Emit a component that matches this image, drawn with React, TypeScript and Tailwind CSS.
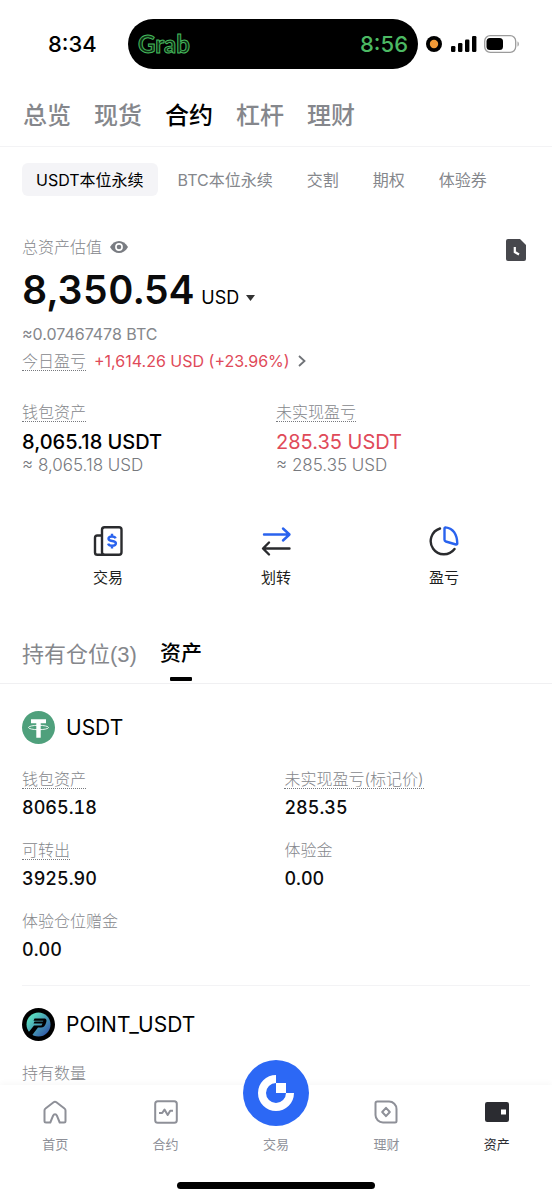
import React, { useState } from "react";
import clsx from "clsx";

const accountTabs = ["总览", "现货", "合约", "杠杆", "理财"];
const contractTypes = ["USDT本位永续", "BTC本位永续", "交割", "期权", "体验券"];

const usdtFields = [
  { label: "钱包资产", value: "8065.18", hint: true },
  { label: "未实现盈亏(标记价)", value: "285.35", hint: true },
  { label: "可转出", value: "3925.90", hint: true },
  { label: "体验金", value: "0.00", hint: false },
  { label: "体验仓位赠金", value: "0.00", hint: false },
];

function Label({ children, hint = false }: { children: React.ReactNode; hint?: boolean }) {
  return (
    <span
      className={clsx(
        "inline-block whitespace-nowrap border-b text-base leading-[18px] font-light text-[#85878c]",
        hint ? "border-dotted border-[#77797e]" : "border-transparent"
      )}
    >
      {children}
    </span>
  );
}

function StatusBar() {
  return (
    <div className="flex h-[84px] items-start pt-[19px]">
      <div className="flex h-[50px] w-32 items-center pl-12 text-[22px] font-medium text-black">8:34</div>
      <div className="flex h-[50px] flex-1 items-center justify-between rounded-full bg-black px-[10px]">
        <span className="font-['Lato'] text-2xl font-bold text-[#0c2a12] [-webkit-text-stroke:1px_#45b85c]">Grab</span>
        <span className="text-[22px] font-medium text-[#4cb963]">8:56</span>
      </div>
      <div className="flex h-[50px] w-[134px] items-center pl-2">
        <svg className="h-4 w-4" viewBox="0 0 16 16">
          <circle cx="8" cy="8" r="8" fill="#000" />
          <circle cx="8" cy="8" r="4.2" fill="#f19a37" />
        </svg>
        <svg className="ml-[9px] h-[18px] w-[26px]" viewBox="0 0 26 18">
          <rect x="0" y="11" width="4.4" height="6" rx="1.2" />
          <rect x="7" y="8" width="4.4" height="9" rx="1.2" />
          <rect x="14" y="4.5" width="4.4" height="12.5" rx="1.2" />
          <rect x="21" y="1" width="4.4" height="16" rx="1.2" />
        </svg>
        <svg className="ml-[7px] h-[18px] w-9" viewBox="0 0 36 18">
          <rect x="0.7" y="0.7" width="31" height="16.6" rx="5.5" fill="none" stroke="#9b9b9b" strokeWidth="1.3" />
          <rect x="2.5" y="3" width="16.5" height="12" rx="3.5" fill="#000" />
          <path d="M33.5 6.5c1.8.6 1.8 4.4 0 5z" fill="#9b9b9b" />
        </svg>
      </div>
    </div>
  );
}

function TradeIcon() {
  return (
    <svg className="h-8 w-8" viewBox="0 0 32 32" fill="none" stroke="#2a2b2e" strokeWidth="2.4" strokeLinejoin="round">
      <rect x="10" y="2.3" width="19.5" height="27.4" rx="2.5" />
      <path d="M10 10.500H5.300A2.300 2.300 0 0 0 3 12.800v14.600a2.300 2.300 0 0 0 2.300 2.300h7" />
      <path
        d="M23.600 13.400c-.5-1.300-1.700-1.900-3.600-1.900-2.100 0-3.500.9-3.500 2.300 0 3.300 7.400 1.200 7.400 4.500 0 1.500-1.500 2.400-3.900 2.400-2 0-3.400-.7-3.900-2.100M20 8.700v3M20 20.500v3"
        stroke="#2a63ee"
        strokeWidth="2.4"
      />
    </svg>
  );
}

function TransferIcon() {
  return (
    <svg className="h-8 w-8" viewBox="0 0 32 32" fill="none" strokeWidth="2.4" strokeLinecap="round" strokeLinejoin="round">
      <path d="M4 9.5h25M23 3.500l6.500 6-6.500 6" stroke="#2a63ee" />
      <path d="M29.500 23.500H3.500M9 17.500l-6 6 6 6" stroke="#2a2b2e" />
    </svg>
  );
}

function ProfitIcon() {
  return (
    <svg className="h-8 w-8" viewBox="0 0 32 32" fill="none" strokeWidth="2.4" strokeLinecap="round" strokeLinejoin="round">
      <path d="M12 3.500A13.200 13.200 0 1 0 26.500 24" stroke="#2a2b2e" />
      <path d="M16.500 3.500c0-.8.500-1.300 1.300-1.100C24.500 3.500 29 9 29.300 18.500c0 .8-.6 1.200-1.300 1l-10.200-3c-.8-.2-1.300-.8-1.300-1.700z" stroke="#2a63ee" />
    </svg>
  );
}

const actions = [
  { label: "交易", icon: <TradeIcon /> },
  { label: "划转", icon: <TransferIcon /> },
  { label: "盈亏", icon: <ProfitIcon /> },
];

const navItems = [
  {
    label: "首页",
    icon: (
      <svg className="h-6 w-6" viewBox="0 0 24 24" fill="none" stroke="currentColor" strokeWidth="2" strokeLinejoin="round">
        <path d="M1.500 10.500c0-.9.3-1.500 1-2L10.600 2.300c.9-.7 1.900-.7 2.800 0l8.100 6.200c.7.500 1 1.100 1 2V21c0 .9-.6 1.500-1.500 1.500h-4.300l-2.800-6.800c-.4-1-.9-1.500-1.900-1.500s-1.500.5-1.900 1.500L7.300 22.500H3A1.500 1.500 0 0 1 1.500 21z" />
      </svg>
    ),
  },
  {
    label: "合约",
    icon: (
      <svg className="h-6 w-6" viewBox="0 0 24 24" fill="none" stroke="currentColor" strokeWidth="2" strokeLinejoin="round">
        <rect x="1.2" y="1.2" width="21.6" height="21.6" rx="2.5" />
        <path d="M5 13h3.200L10.500 9.500l3.200 5.500 2.500-4.200H19" />
      </svg>
    ),
  },
  {
    label: "交易",
    icon: (
      <svg className="h-[66px] w-[66px]" viewBox="0 0 66 66">
        <circle cx="33" cy="33" r="33" fill="#2c68f5" />
        {/* ring with the upper right quarter cut out */}
        <path d="M33 15v8a10 10 0 1 0 10 10h8a18 18 0 1 1-18-18z" fill="#fff" />
        <path d="M33 23h10v10H33z" fill="#fff" />
      </svg>
    ),
  },
  {
    label: "理财",
    icon: (
      <svg className="h-6 w-6" viewBox="0 0 24 24" fill="none" stroke="currentColor" strokeWidth="2" strokeLinejoin="round">
        <path d="M3.200 1.500H15a7.500 7.500 0 0 1 7.500 7.500v12c0 .9-.6 1.500-1.500 1.500H9A7.500 7.500 0 0 1 1.500 15V3.200c0-1 .7-1.700 1.700-1.700z" />
        <path d="M12 7.800l3.800 4.200-3.800 4.200L8.200 12z" />
      </svg>
    ),
  },
  {
    label: "资产",
    icon: (
      <svg className="h-6 w-6" viewBox="0 0 24 24">
        <rect x="0" y="2" width="24" height="20" rx="2.2" fill="#2b2c31" />
        <rect x="16" y="9.5" width="5" height="5" fill="#fff" />
      </svg>
    ),
  },
];

function TetherLogo() {
  return (
    <svg className="h-[33px] w-[33px]" viewBox="0 0 33 33">
      <circle cx="16.5" cy="16.5" r="16.5" fill="#4fa07c" />
      <path d="M9 8.200h15v4h-5.300v14.500h-4.400V12.200H9z" fill="#fff" />
      <ellipse cx="16.5" cy="16.5" rx="10" ry="2.2" fill="none" stroke="#fff" strokeWidth="0.9" />
    </svg>
  );
}

function PointLogo() {
  return (
    <svg className="h-[33px] w-[33px]" viewBox="0 0 33 33">
      <defs>
        <linearGradient id="point" x1="0" y1="0" x2="1" y2="1">
          <stop offset="0.2" stopColor="#58d6bd" />
          <stop offset="0.9" stopColor="#3156a8" />
        </linearGradient>
      </defs>
      <circle cx="16.5" cy="16.5" r="16.5" fill="#000" />
      <circle cx="16.5" cy="16.5" r="12" fill="url(#point)" />
      <path d="M12.500 10.500h9.500c2.600 0 3 2 2 4.500-1 3-2.500 4.500-5 4.500h-3L9.500 28 6 25l6-7.500h7.500l1-2h-9l1-2h8.500l.3-.8h-9.800z" fill="#000" />
    </svg>
  );
}

export default function App() {
  const [account, setAccount] = useState("合约");
  const [contract, setContract] = useState("USDT本位永续");

  return (
    <div className="flex min-h-screen flex-col bg-white font-['Inter','Noto_Sans_CJK_SC',sans-serif] text-[#0b0b0c]">
      <StatusBar />

      <nav className="flex h-[63px] items-center gap-[23px] border-b border-[#f3f3f5] px-[23px]">
        {accountTabs.map((tab) => (
          <button
            key={tab}
            onClick={() => setAccount(tab)}
            className={clsx("pt-[2px] text-2xl font-medium whitespace-nowrap", tab === account ? "text-black" : "text-[#85878c]")}
          >
            {tab}
          </button>
        ))}
      </nav>

      <main>
        <div className="flex gap-[6px] px-[22px] pt-4">
          {contractTypes.map((type) => (
            <button
              key={type}
              onClick={() => setContract(type)}
              className={clsx(
                "h-[33px] rounded-md px-[14px] text-base whitespace-nowrap",
                type === contract ? "bg-[#f4f4f7] text-black" : "text-[#85878c]"
              )}
            >
              {type}
            </button>
          ))}
        </div>

        <section className="px-[22px] pt-[39px]">
          <div className="flex h-6 items-center">
            <Label>总资产估值</Label>
            <button aria-label="隐藏资产" className="ml-2">
              <svg className="h-3 w-[18px]" viewBox="0 0 18 12">
                <path d="M0 6C4.500-2 13.500-2 18 6 13.500 14 4.500 14 0 6z" fill="#797c82" />
                <circle cx="9" cy="6" r="3.1" fill="none" stroke="#fff" strokeWidth="1.6" />
              </svg>
            </button>
            <button aria-label="历史记录" className="ml-auto mr-1 pt-[5px]">
              <svg className="h-[22px] w-5" viewBox="0 0 20 22">
                <path d="M2 0h12l6 6v14a2 2 0 0 1-2 2H2a2 2 0 0 1-2-2V2a2 2 0 0 1 2-2z" fill="#47484d" />
                <path d="M8.800 8v5l4.200 2.500" fill="none" stroke="#fff" strokeWidth="2.2" />
              </svg>
            </button>
          </div>
          <div className="mt-[7px] flex items-baseline leading-[48px]">
            <span className="text-[39px] font-semibold tabular-nums">8,350.54</span>
            <button className="ml-[7px] flex items-center gap-[7px] text-lg text-black">
              USD
              <svg className="h-[6px] w-[9px]" viewBox="0 0 9 6">
                <path d="M0 0h9L4.500 6z" fill="#333" />
              </svg>
            </button>
          </div>
          <p className="mt-2 text-base leading-6 text-[#85878c]">≈0.07467478 BTC</p>
          <div className="mt-[3px] flex h-6 items-center">
            <Label hint>今日盈亏</Label>
            <a href="#pnl" className="ml-2 flex items-center gap-2 text-base text-[#e04a59]">
              +1,614.26 USD (+23.96%)
              <svg className="h-3 w-2" viewBox="0 0 8 12" fill="none" stroke="#6f7277" strokeWidth="1.8">
                <path d="M1 1l5.500 5L1 11" />
              </svg>
            </a>
          </div>

          <div className="mt-[30px] grid grid-cols-2">
            <div>
              <div className="flex">
                <Label hint>钱包资产</Label>
              </div>
              <p className="mt-2 text-xl leading-6 font-medium text-black">8,065.18 USDT</p>
              <p className="text-[17px] leading-[22px] font-light text-[#77797e]">≈ 8,065.18 USD</p>
            </div>
            <div>
              <div className="flex">
                <Label hint>未实现盈亏</Label>
              </div>
              <p className="mt-2 text-xl leading-6 text-[#e04a59]">285.35 USDT</p>
              <p className="text-[17px] leading-[22px] font-light text-[#77797e]">≈ 285.35 USD</p>
            </div>
          </div>
        </section>

        <div className="mt-[49px] grid grid-cols-3 px-6">
          {actions.map((action) => (
            <button key={action.label} className="flex flex-col items-center gap-[11px]">
              {action.icon}
              <span className="text-[15px] leading-5 text-[#1d1e20]">{action.label}</span>
            </button>
          ))}
        </div>

        <div className="mt-12 flex h-12 gap-[23px] border-b border-[#f0f0f2] px-[22px]">
          <button className="self-start font-['Liberation_Sans','Noto_Sans_CJK_SC',sans-serif] text-[22px] leading-[38px] text-[#85878c]">
            持有仓位(3)
          </button>
          <button className="flex flex-col items-center gap-[7px] text-[21px] leading-[34px] font-medium text-black">
            资产
            <span className="h-1 w-[22px] rounded-[1px] bg-black" />
          </button>
        </div>

        <section className="px-[22px] pt-[27px]">
          <div className="flex h-[33px] items-center gap-[11px]">
            <TetherLogo />
            <h2 className="text-[21px] text-black">USDT</h2>
          </div>
          <dl className="mt-[26px] grid grid-cols-[31fr_29fr] gap-y-[21px] border-b border-[#f3f3f5] pb-[23px]">
            {usdtFields.map((field) => (
              <div key={field.label}>
                <dt className="flex">
                  <Label hint={field.hint}>{field.label}</Label>
                </dt>
                <dd className="mt-[7px] text-lg leading-6 font-medium tabular-nums">{field.value}</dd>
              </div>
            ))}
          </dl>
        </section>

        <section className="px-[22px] pt-[22px]">
          <div className="flex h-[33px] items-center gap-[11px]">
            <PointLogo />
            <h2 className="text-[21px] text-black">POINT_USDT</h2>
          </div>
          <div className="mt-[23px] flex">
            <Label>持有数量</Label>
          </div>
        </section>
      </main>

      <footer className="mt-auto bg-white shadow-[0_-2px_6px_rgba(0,0,0,0.03)]">
        <nav className="grid h-[97px] grid-cols-5">
          {navItems.map((item) => (
            <a
              key={item.label}
              href={"#" + item.label}
              className={clsx(
                "flex flex-col items-center justify-end gap-[10px] pb-[28px]",
                item.label === "资产" ? "text-[#2b2c31]" : "text-[#8e9098]"
              )}
            >
              {/* every icon sits in a 24px slot, the trade button rises out of it */}
              <span className="flex h-6 items-center justify-center">
                <span className={item.label === "交易" ? "relative bottom-[19px]" : ""}>{item.icon}</span>
              </span>
              <span className="text-[13px] leading-5">{item.label}</span>
            </a>
          ))}
        </nav>
        <div className="mx-auto mb-[11px] h-[7px] w-[198px] rounded-full bg-black" />
      </footer>
    </div>
  );
}
